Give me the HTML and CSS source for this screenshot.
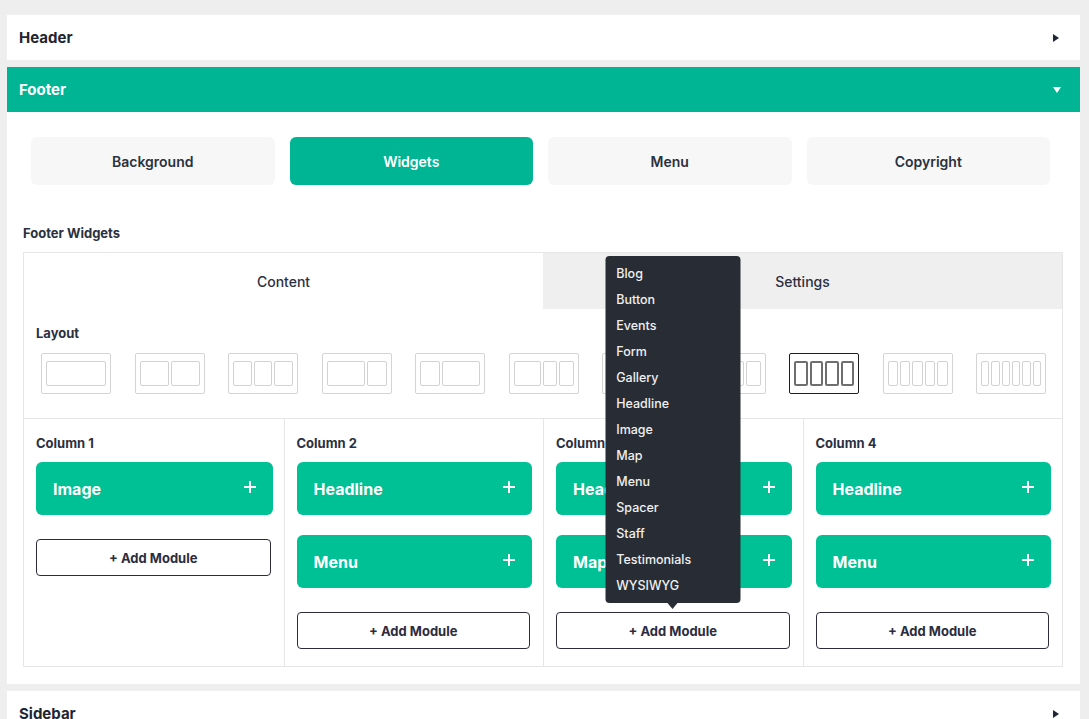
FILE: index.html
```html
<!DOCTYPE html>
<html lang="en">
<head>
<meta charset="utf-8">
<title>Footer Widgets</title>
<link rel="stylesheet" href="styles.css">
</head>
<body>
<div class="page">
  <section class="panel">
    <div class="panel-head"><span>Header</span><span class="tri tri-right"></span></div>
  </section>

  <section class="panel">
    <div class="panel-head active"><span>Footer</span><span class="tri tri-down"></span></div>
    <div class="panel-body">
      <div class="subtabs">
        <div class="subtab">Background</div>
        <div class="subtab current">Widgets</div>
        <div class="subtab">Menu</div>
        <div class="subtab">Copyright</div>
      </div>

      <div class="group-label">Footer Widgets</div>

      <div class="widget-box">
        <div class="box-tabs">
          <div class="box-tab current">Content</div>
          <div class="box-tab">Settings</div>
        </div>

        <div class="layout">
          <div class="layout-label">Layout</div>
          <div class="layout-options">
            <div class="lo"><i class="g1"></i></div>
            <div class="lo"><i class="g1"></i><i class="g1"></i></div>
            <div class="lo"><i class="g1"></i><i class="g1"></i><i class="g1"></i></div>
            <div class="lo"><i class="g2"></i><i class="g1"></i></div>
            <div class="lo"><i class="g1"></i><i class="g2"></i></div>
            <div class="lo"><i class="g2"></i><i class="g1"></i><i class="g1"></i></div>
            <div class="lo"><i class="g1"></i><i class="g1"></i><i class="g2"></i></div>
            <div class="lo"><i class="g1"></i><i class="g2"></i><i class="g1"></i></div>
            <div class="lo selected"><i class="g1"></i><i class="g1"></i><i class="g1"></i><i class="g1"></i></div>
            <div class="lo"><i class="g1"></i><i class="g1"></i><i class="g1"></i><i class="g1"></i><i class="g1"></i></div>
            <div class="lo"><i class="g1"></i><i class="g1"></i><i class="g1"></i><i class="g1"></i><i class="g1"></i><i class="g1"></i></div>
          </div>
        </div>

        <div class="columns">
          <div class="col">
            <div class="col-title">Column 1</div>
            <div class="module"><span>Image</span><span class="plus"></span></div>
            <div class="add-wrap"><div class="add-btn">+ Add Module</div></div>
          </div>
          <div class="col">
            <div class="col-title">Column 2</div>
            <div class="module"><span>Headline</span><span class="plus"></span></div>
            <div class="module"><span>Menu</span><span class="plus"></span></div>
            <div class="add-wrap"><div class="add-btn">+ Add Module</div></div>
          </div>
          <div class="col">
            <div class="col-title">Column 3</div>
            <div class="module"><span>Headline</span><span class="plus"></span></div>
            <div class="module"><span>Map</span><span class="plus"></span></div>
            <div class="add-wrap">
              <div class="add-btn">+ Add Module</div>
              <ul class="dropdown">
                <li>Blog</li>
                <li>Button</li>
                <li>Events</li>
                <li>Form</li>
                <li>Gallery</li>
                <li>Headline</li>
                <li>Image</li>
                <li>Map</li>
                <li>Menu</li>
                <li>Spacer</li>
                <li>Staff</li>
                <li>Testimonials</li>
                <li>WYSIWYG</li>
              </ul>
            </div>
          </div>
          <div class="col">
            <div class="col-title">Column 4</div>
            <div class="module"><span>Headline</span><span class="plus"></span></div>
            <div class="module"><span>Menu</span><span class="plus"></span></div>
            <div class="add-wrap"><div class="add-btn">+ Add Module</div></div>
          </div>
        </div>
      </div>
    </div>
  </section>

  <section class="panel">
    <div class="panel-head"><span>Sidebar</span><span class="tri tri-right"></span></div>
  </section>
</div>
</body>
</html>
```

FILE: styles.css
```css
* { box-sizing: border-box; }

html, body {
  margin: 0;
  background: #eeeeee;
  font-family: Inter, "Noto Sans", "Liberation Sans", sans-serif;
  color: #2c2f3f;
}

.page {
  padding: 15px 9px 0 7px;
}

.panel {
  background: #ffffff;
  margin-bottom: 7px;
}

.panel-head {
  height: 45px;
  display: flex;
  align-items: center;
  justify-content: space-between;
  padding: 0 19px 0 12px;
  font-size: 15px;
  font-weight: 700;
  color: #1f2533;
}

.panel-head.active {
  background: #00b594;
  color: #ffffff;
}

.tri {
  width: 0;
  height: 0;
  display: block;
}

.tri-right {
  border-top: 4px solid transparent;
  border-bottom: 4px solid transparent;
  border-left: 6px solid #1f2533;
  margin-right: 2px;
}

.tri-down {
  border-left: 4px solid transparent;
  border-right: 4px solid transparent;
  border-top: 6px solid #ffffff;
}

.panel-body {
  padding: 25px 17px 17px 16px;
}

.subtabs {
  display: grid;
  grid-template-columns: repeat(4, 1fr);
  gap: 15px;
  margin: 0 13px 0 8px;
}

.subtab {
  height: 48px;
  border-radius: 6px;
  background: #f7f7f7;
  display: flex;
  align-items: center;
  justify-content: center;
  font-size: 14px;
  font-weight: 600;
  color: #2a3140;
}

.subtab.current {
  background: #00b594;
  color: #ffffff;
}

.group-label {
  margin: 39px 0 10px;
  font-size: 13px;
  line-height: 18px;
  font-weight: 700;
  color: #2a3140;
}

.widget-box {
  border: 1px solid #e6e6e6;
}

.box-tabs {
  display: flex;
  height: 56px;
}

.box-tab {
  flex: 1;
  display: flex;
  align-items: center;
  justify-content: center;
  font-size: 14px;
  font-weight: 500;
  color: #2c2f3f;
  background: #efefef;
}

.box-tab.current {
  background: #ffffff;
}

.layout {
  padding: 16px 16px 24px 12px;
  border-bottom: 1px solid #e6e6e6;
}

.layout-label {
  font-size: 13px;
  line-height: 16px;
  font-weight: 700;
  color: #2c2f3f;
  margin-bottom: 12px;
}

.layout-options {
  display: flex;
  justify-content: space-between;
  padding-left: 5px;
}

.lo {
  width: 70px;
  height: 41px;
  border: 1px solid #d4d4d4;
  border-radius: 2px;
  padding: 7px 4px;
  display: flex;
  gap: 2px;
}

.lo i {
  display: block;
  border: 1px solid #d2d2d2;
  border-radius: 2px;
  min-width: 0;
}

.lo .g1 { flex: 1 1 0; }
.lo .g2 { flex: 2 1 0; }

.lo.selected {
  border-color: #1e1e1e;
}

.lo.selected i {
  border: 2px solid #6f6f6f;
}

.columns {
  display: grid;
  grid-template-columns: repeat(4, 1fr);
}

.col {
  padding: 15px 11px 17px 12px;
  border-left: 1px solid #e6e6e6;
}

.col:first-child {
  border-left: none;
}

.col-title {
  font-size: 13px;
  line-height: 18px;
  font-weight: 700;
  color: #2c2f3f;
  margin-bottom: 10px;
}

.module {
  height: 53px;
  border-radius: 6px;
  background: #00c096;
  color: #ffffff;
  display: flex;
  align-items: center;
  justify-content: space-between;
  padding: 0 17px;
  font-size: 16px;
  font-weight: 700;
  margin-bottom: 20px;
}

.plus {
  position: relative;
  width: 12px;
  height: 12px;
  margin-top: -3px;
}

.plus::before,
.plus::after {
  content: "";
  position: absolute;
  background: #ffffff;
}

.plus::before {
  left: 0;
  top: 5px;
  width: 12px;
  height: 2px;
}

.plus::after {
  left: 5px;
  top: 0;
  width: 2px;
  height: 12px;
}

.add-wrap {
  position: relative;
  margin: 24px 2px 0 0;
}

.add-btn {
  height: 37px;
  border: 1px solid #2c2c3e;
  border-radius: 4px;
  display: flex;
  align-items: center;
  justify-content: center;
  font-size: 13px;
  font-weight: 700;
  color: #2c2c3e;
  background: #ffffff;
}

.dropdown {
  position: absolute;
  left: 50%;
  bottom: calc(100% + 9px);
  transform: translateX(-50%);
  width: 135px;
  margin: 0;
  padding: 5px 0 4px;
  list-style: none;
  background: #282d35;
  border-radius: 4px;
  z-index: 5;
}

.dropdown::after {
  content: "";
  position: absolute;
  left: 50%;
  top: 100%;
  margin-left: -5px;
  border-left: 5px solid transparent;
  border-right: 5px solid transparent;
  border-top: 6px solid #282d35;
}

.dropdown li {
  height: 26px;
  line-height: 26px;
  padding: 0 10px 0 11px;
  font-size: 12.5px;
  font-weight: 500;
  color: #f0f0f0;
}
```
